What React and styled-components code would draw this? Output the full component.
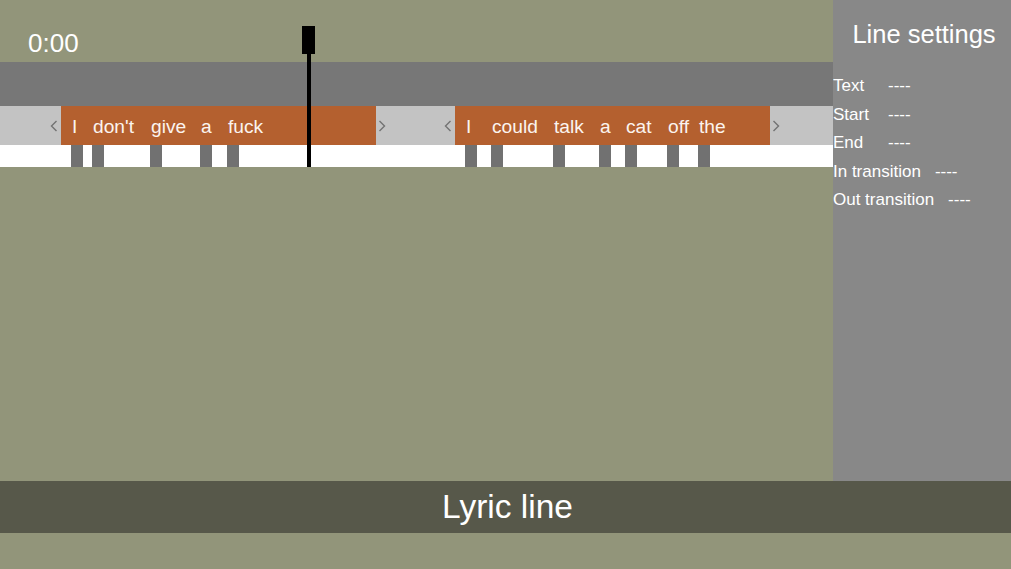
import styled, { createGlobalStyle } from "styled-components";

const GlobalStyle = createGlobalStyle`
  html, body {
    margin: 0;
    padding: 0;
    background: #92957a;
  }
  * {
    box-sizing: border-box;
  }
  body {
    font-family: "Liberation Sans", Arial, sans-serif;
    color: #fff;
  }
`;

const Page = styled.div`
  min-height: 100vh;
  background: #92957a;
  display: flex;
  flex-direction: column;
`;

const Workspace = styled.div`
  display: flex;
  height: 481px;
`;

const Editor = styled.div`
  flex: 1;
  position: relative;
`;

const Header = styled.div`
  height: 62px;
  padding: 28px 0 0 28px;
`;

const TimeLabel = styled.div`
  font-size: 26px;
  line-height: 30px;
`;

const WaveTrack = styled.div`
  height: 44px;
  background: #777777;
`;

const LyricTrack = styled.div`
  height: 39px;
  background: #c3c3c3;
  position: relative;
`;

const LineBlock = styled.div`
  position: absolute;
  top: 0;
  bottom: 0;
  background: #b4602f;
`;

const Handle = styled.svg`
  position: absolute;
  top: 14px;
  width: 8px;
  height: 12px;
  ${(p) => (p.$side === "left" ? "left: -11px;" : "right: -10px;")}
`;

const Word = styled.span`
  position: absolute;
  top: 10px;
  margin-left: 1px;
  font-size: 19.2px;
  line-height: 22px;
  color: #fbf4ef;
  white-space: nowrap;
`;

const MarkerTrack = styled.div`
  height: 22px;
  background: #fff;
  position: relative;
`;

const Marker = styled.div`
  position: absolute;
  top: 0;
  bottom: 0;
  width: 12px;
  background: #717171;
`;

const Playhead = styled.div`
  position: absolute;
  left: 302px;
  top: 26px;
  width: 13px;
  display: flex;
  flex-direction: column;
  align-items: center;
`;

const PlayheadGrip = styled.div`
  width: 13px;
  height: 28px;
  background: #000;
`;

const PlayheadLine = styled.div`
  width: 4px;
  height: 113px;
  background: #000;
`;

const Sidebar = styled.aside`
  width: 178px;
  background: #888888;
  padding-top: 20px;
`;

const SidebarTitle = styled.h2`
  margin: 0 0 23px;
  font-size: 25.5px;
  font-weight: normal;
  line-height: 29px;
  text-align: center;
  padding-left: 4px;
`;

const SettingRow = styled.div`
  display: flex;
  font-size: 17px;
  line-height: 28.5px;
  white-space: nowrap;
`;

const SettingLabel = styled.span`
  min-width: 41px;
  margin-right: 14px;
`;

const SettingValue = styled.span``;

const BottomBar = styled.div`
  height: 52px;
  background: #57584a;
  display: flex;
  align-items: center;
  justify-content: center;
  padding-left: 4px;
  font-size: 33.5px;
  line-height: 52px;
`;

const lines = [
  {
    at: 61,
    width: 315,
    words: [
      { text: "I", at: 10 },
      { text: "don't", at: 31 },
      { text: "give", at: 89 },
      { text: "a", at: 139 },
      { text: "fuck", at: 166 },
    ],
  },
  {
    at: 455,
    width: 315,
    words: [
      { text: "I", at: 10 },
      { text: "could", at: 36 },
      { text: "talk", at: 98 },
      { text: "a", at: 144 },
      { text: "cat", at: 170 },
      { text: "off", at: 212 },
      { text: "the", at: 243 },
    ],
  },
];

const settings = [
  ["Text", "----"],
  ["Start", "----"],
  ["End", "----"],
  ["In transition", "----"],
  ["Out transition", "----"],
];

function Chevron({ side }) {
  const points = side === "left" ? "6.5,1 1.5,6 6.5,11" : "1.5,1 6.5,6 1.5,11";
  return (
    <Handle $side={side} viewBox="0 0 8 12">
      <polyline points={points} fill="none" stroke="#727272" strokeWidth="1.4" />
    </Handle>
  );
}

export default function App() {
  return (
    <Page>
      <GlobalStyle />
      <Workspace>
        <Editor>
          <Header>
            <TimeLabel>0:00</TimeLabel>
          </Header>
          <WaveTrack />
          <LyricTrack>
            {lines.map((line, i) => (
              <LineBlock key={i} style={{ left: line.at, width: line.width }}>
                <Chevron side="left" />
                {line.words.map((w, j) => (
                  <Word key={j} style={{ left: w.at }}>
                    {w.text}
                  </Word>
                ))}
                <Chevron side="right" />
              </LineBlock>
            ))}
          </LyricTrack>
          <MarkerTrack>
            {lines.map((line) =>
              line.words.map((w, j) => (
                <Marker key={line.at + "-" + j} style={{ left: line.at + w.at }} />
              ))
            )}
          </MarkerTrack>
          <Playhead>
            <PlayheadGrip />
            <PlayheadLine />
          </Playhead>
        </Editor>
        <Sidebar>
          <SidebarTitle>Line settings</SidebarTitle>
          {settings.map(([label, value]) => (
            <SettingRow key={label}>
              <SettingLabel>{label}</SettingLabel>
              <SettingValue>{value}</SettingValue>
            </SettingRow>
          ))}
        </Sidebar>
      </Workspace>
      <BottomBar>Lyric line</BottomBar>
    </Page>
  );
}
